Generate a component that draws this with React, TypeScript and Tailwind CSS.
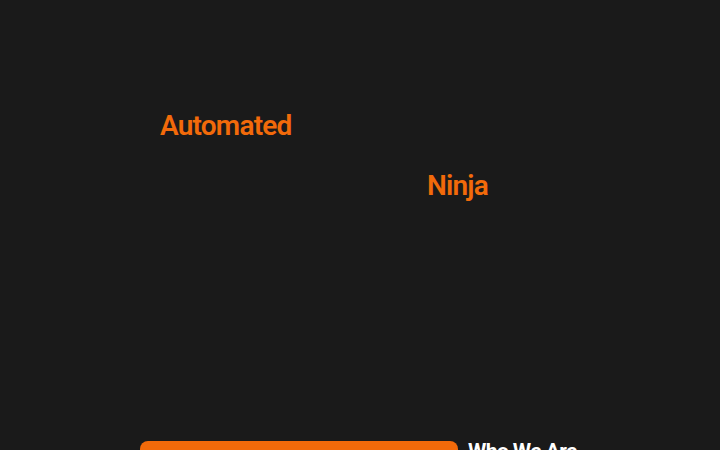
import React from "react";

export default function App() {
  return (
    <div
      className="w-[720px] h-[450px] overflow-hidden bg-[#1a1a1a] flex flex-col"
      style={{ fontFamily: '"Roboto", "Liberation Sans", sans-serif' }}
    >
      <div className="pt-[108px] pl-[160px]">
        <h2 className="text-[28px] leading-[36px] font-semibold text-[#f26a0a] tracking-[-0.8px]">
          Automated
        </h2>
      </div>
      <div className="pt-[24px] pl-[427px]">
        <h2 className="text-[28px] leading-[36px] font-semibold text-[#f26a0a] tracking-[-0.8px]">
          Ninja
        </h2>
      </div>
      <div className="mt-[237px] pl-[140px] flex gap-[10px] items-start shrink-0">
        <div className="w-[318px] h-[40px] rounded-[8px] bg-[#f26a0a]" />
        <h3 className="text-[21px] leading-[24px] font-bold text-white tracking-[-0.6px] -mt-[2px]">
          Who We Are
        </h3>
      </div>
    </div>
  );
}
